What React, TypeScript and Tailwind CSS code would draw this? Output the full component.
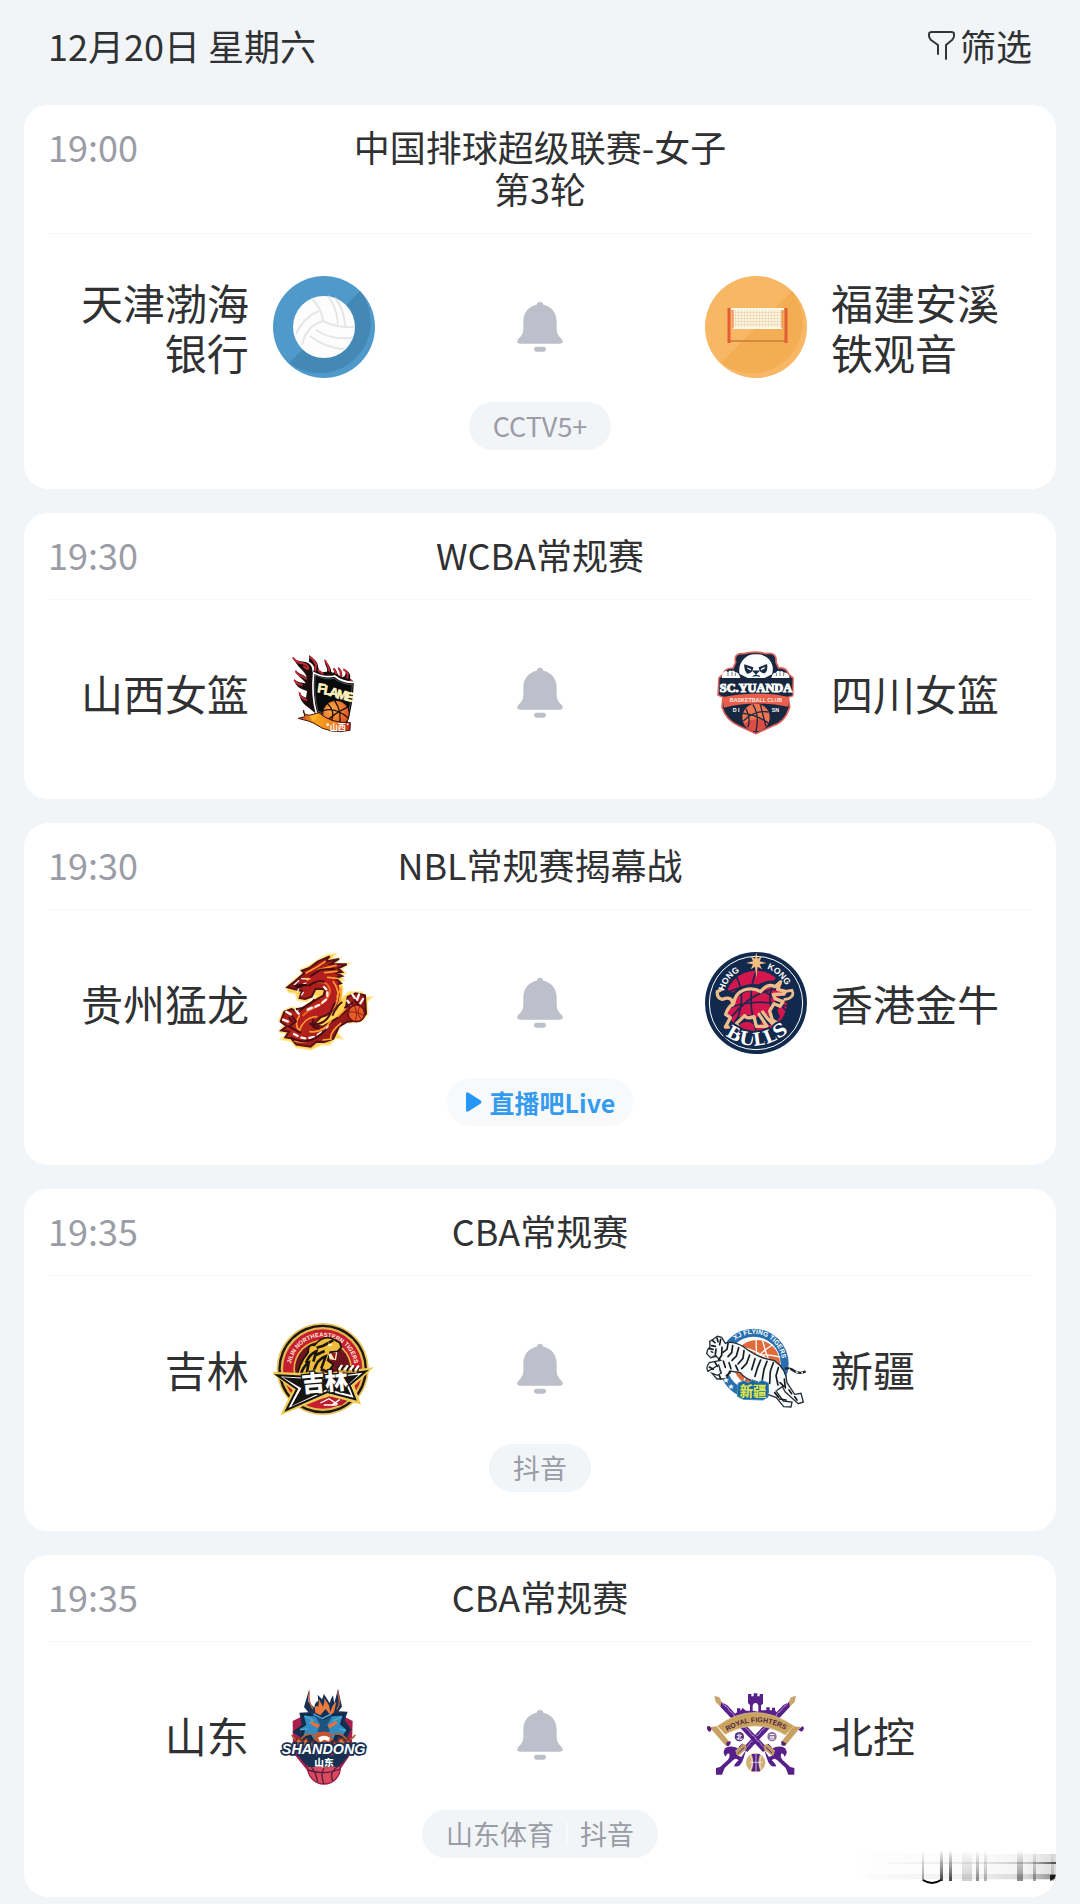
import type { ReactNode } from "react";

interface Team {
  name: string;
  logo: ReactNode;
}

interface Match {
  time: string;
  title: string[];
  home: Team;
  away: Team;
  channels: string[];
  live?: string;
}

const logoClass = "w-[102px] h-[102px] shrink-0";

function VolleyballLogo() {
  return (
    <svg viewBox="0 0 102 102" className={logoClass}>
      <circle cx="51" cy="51" r="51" fill="#4f9aca" />
      <path d="M87 15A51 51 0 0 1 16 87Z" fill="#4488b6" />
      <circle cx="51" cy="51" r="31" fill="#fdfdfd" />
      <g fill="none" stroke="#e6e6e8" strokeWidth="2">
        <path d="M39 23Q49 33 50 45Q33 50 29 69" />
        <path d="M55 20Q64 32 65 48" />
        <path d="M62 22Q71 32 72 50" />
        <path d="M50 45Q63 52 82 51" />
        <path d="M43 54Q57 64 79 62" />
        <path d="M37 60Q52 72 71 73" />
        <path d="M46 35Q31 41 23 58" />
      </g>
    </svg>
  );
}

function NetLogo() {
  return (
    <svg viewBox="0 0 102 102" className={logoClass}>
      <defs>
        <pattern id="net" width="3" height="3" patternUnits="userSpaceOnUse">
          <rect width="3" height="3" fill="#fdf3df" />
          <path d="M0 0H3M0 0V3" stroke="#e6d0a8" strokeWidth="1" />
        </pattern>
      </defs>
      <circle cx="51" cy="51" r="51" fill="#f8b765" />
      <path d="M87 15A51 51 0 0 1 16 87Z" fill="#f3ad53" />
      <rect x="25" y="64" width="56" height="2" fill="#d38a3c" />
      <rect x="28" y="33" width="49" height="19" fill="url(#net)" />
      <path d="M26 33H79M28 52H77" stroke="#fff7e8" strokeWidth="2" />
      <path d="M28 34V52M77 34V52" stroke="#e77c4c" strokeWidth="1" />
      <path d="M24 32V67M81 32V67" stroke="#e35e37" strokeWidth="3" />
    </svg>
  );
}

function FlameLogo() {
  return (
    <svg viewBox="39 36 306 306" className={logoClass}>
      <defs>
        <linearGradient id="flameRibbon" x1="0" x2="1" y1="0" y2="0">
          <stop offset="0" stopColor="#d2401c" />
          <stop offset=".35" stopColor="#f7a21c" />
          <stop offset=".7" stopColor="#f0801f" />
          <stop offset="1" stopColor="#c6201b" />
        </linearGradient>
        <radialGradient id="flameBall" cx=".35" cy=".35" r=".8">
          <stop offset="0" stopColor="#fbb046" />
          <stop offset="1" stopColor="#d8411c" />
        </radialGradient>
      </defs>
      <path
        d="M97 80C107 93 124 94 137 96C151 101 159 111 157 126C170 117 159 101 147 95L148 75C158 86 172 91 174 108L178 127L201 125C205 112 192 106 194 86C202 103 213 108 214 126C225 134 224 119 220 113C233 119 229 132 239 138C244 129 235 121 235 112C247 121 248 134 246 142C260 139 260 123 249 116C265 121 274 133 270 145L283 158L270 170L166 250L146 233C133 225 119 213 116 184C123 200 131 199 138 204L141 183C124 177 107 173 102 147C112 158 124 157 137 160C132 147 115 146 106 119C119 135 132 133 140 142C138 125 112 113 97 80Z"
        fill="#1a0c0e"
      />
      <g fill="none" stroke="#c42a35" strokeWidth="6" strokeLinecap="round" strokeLinejoin="round">
        <path d="M100 84Q109 98 127 100Q147 104 144 117Q137 116 132 109" />
        <path d="M108 125Q115 137 130 140L138 146" />
        <path d="M104 152Q113 165 126 164" />
        <path d="M119 190Q123 206 139 210" />
        <path d="M151 81Q164 92 168 104L166 121" />
        <path d="M196 93Q206 106 208 122" />
        <path d="M236 115Q245 126 242 138" />
        <path d="M252 119Q268 129 262 143" />
        <path d="M222 117L228 130M176 122L188 130M272 151L281 158" />
      </g>
      <path d="M161 128Q195 145 224 138Q248 158 284 157Q282 224 264 281L169 249Q154 197 161 128Z" fill="#07080a" stroke="#fff" strokeWidth="5" />
      <path d="M166 135Q196 151 222 145Q246 163 277 164Q275 218 260 270L174 244Q160 192 166 135Z" fill="#08090b" stroke="#73777a" strokeWidth="2" />
      <g fontFamily="Liberation Sans" fontWeight="700" fontSize="38" fill="#fff3bc" stroke="#fff3bc" strokeWidth="2">
        <text x="171" y="186" transform="rotate(8 171 186)">F</text>
        <text x="190" y="192" transform="rotate(10 190 192)">L</text>
        <text x="206" y="197" transform="rotate(12 206 197)">A</text>
        <text x="228" y="204" transform="rotate(12 228 204)">M</text>
        <text x="254" y="211" transform="rotate(12 254 211)">E</text>
      </g>
      <circle cx="228" cy="251" r="40" fill="url(#flameBall)" stroke="#180b09" strokeWidth="3" />
      <path d="M190 242Q225 230 265 264M224 212Q247 245 238 288M196 276Q226 248 262 232M203 222Q231 248 209 281" fill="none" stroke="#25100b" strokeWidth="4" />
      <path d="M131 240Q126 252 147 256L177 248Q208 279 271 278L270 301Q210 315 162 280L145 273Q132 270 115 265L134 260Z" fill="url(#flameRibbon)" stroke="#3a1710" strokeWidth="3" />
      <path d="M148 258L176 252L160 276Z" fill="#ffb52a" />
      <text x="209" y="300" fontFamily="Noto Sans CJK SC" fontSize="24" fontWeight="700" fill="#fff">山西</text>
      <circle cx="203" cy="284" r="4" fill="#fff" />
      <circle cx="263" cy="283" r="3" fill="#fff" />
    </svg>
  );
}

function YuandaLogo() {
  return (
    <svg viewBox="15 6 306 306" className={logoClass}>
      <path
        d="M107 67Q100 38 131 41Q166 32 199 41Q231 36 228 66L236 84Q258 80 267 104L279 114L278 167L265 172L269 202Q254 248 219 257L168 281L116 257Q79 242 66 202L69 172L54 165L57 114L68 104Q76 82 99 85Z"
        fill="#16273f"
        stroke="#dc635c"
        strokeWidth="5"
      />
      <circle cx="126" cy="60" r="15" fill="#172a43" />
      <circle cx="209" cy="59" r="15" fill="#172a43" />
      <path d="M119 102Q113 76 132 56Q148 41 168 43Q194 42 207 58Q224 79 216 103L194 114H143Z" fill="#fbfcfd" />
      <path d="M133 73L160 82Q159 101 141 101Q131 91 133 73ZM201 72L176 82Q178 100 195 100Q205 91 201 72Z" fill="#172b45" />
      <path d="M142 84L153 90M194 83L183 89" stroke="#fff" strokeWidth="4" />
      <path d="M158 93H178L168 102ZM168 101V108M158 109Q168 103 180 109" fill="#172b45" stroke="#172b45" strokeWidth="3" />
      <path d="M66 114Q64 101 75 94Q82 91 84 98Q87 89 96 93Q102 89 105 97Q117 96 121 114ZM214 114Q217 97 228 98Q233 89 240 95Q246 90 251 98Q265 96 269 114Z" fill="#fff" />
      <path d="M84 98V108M96 95V108M106 99V108M229 99V108M240 97V108M251 99V108" stroke="#263e58" strokeWidth="2" />
      <rect x="59" y="115" width="218" height="51" fill="#16273f" />
      <text x="168" y="155" textAnchor="middle" fontFamily="Liberation Serif" fontSize="37" fontWeight="700" fill="#fff" stroke="#fff" strokeWidth="3">SC.YUANDA</text>
      <path d="M68 171Q167 150 267 171L264 200Q167 180 71 203Z" fill="#e95e4c" />
      <text x="168" y="185" textAnchor="middle" fontFamily="Liberation Sans" fontSize="16" fontWeight="700" fill="#fff0e8">BASKETBALL CLUB</text>
      <text x="98" y="216" fontFamily="Liberation Sans" fontSize="16" fontWeight="700" fill="#fff">D I</text>
      <text x="215" y="216" fontFamily="Liberation Sans" fontSize="16" fontWeight="700" fill="#fff">SN</text>
      <circle cx="168" cy="232" r="41" fill="#f27552" />
      <path d="M131 251A41 41 0 0 0 206 247Q170 227 131 251Z" fill="#dc4d46" />
      <path d="M129 220Q168 223 205 249M138 206Q154 241 143 262M159 194Q179 228 168 273M181 194Q190 229 198 259M130 243Q163 210 205 216" fill="none" stroke="#19293f" strokeWidth="4" />
    </svg>
  );
}

function DragonLogo() {
  return (
    <svg viewBox="24 39 306 306" className={logoClass}>
      <defs>
        <linearGradient id="dragonBody" x1="0" y1="0" x2="1" y2="1">
          <stop offset="0" stopColor="#8b0f19" />
          <stop offset=".5" stopColor="#b8261b" />
          <stop offset="1" stopColor="#6f0b17" />
        </linearGradient>
      </defs>
      <path
        d="M63 145L88 121L112 103L104 92L126 83L151 67L184 48L213 43L200 61L227 56L211 74L256 73L230 90L244 103L224 109L239 124L222 128L234 142L232 176L253 158L292 159L303 174L322 173L307 188L309 225L293 246L253 253L234 247L218 283L234 300L211 298L195 318L169 318L137 333L94 326L76 307L45 301L66 286L42 278L56 259L41 244L53 216L79 204L108 209L155 171L146 169L125 188L97 184L91 164L70 160Z"
        fill="#ffd454"
        stroke="#ffeaa0"
        strokeWidth="4"
      />
      <path
        d="M67 145L91 126L118 102L111 95L133 87L158 68L194 52L180 68L222 60L197 75L245 76L219 88L231 99L211 101L231 111L211 117L228 133L215 137Q231 174 206 210Q196 227 168 234L143 258L174 263L215 238L241 218L248 174L272 163L300 169L303 224L287 244L247 248L222 263L205 299L178 309L154 308L137 323L94 317L79 298L61 295L72 278L49 274L65 262L47 248L58 218L79 210L99 219L125 199L176 169L180 151L152 149L140 173L120 180L104 177L111 156Z"
        fill="url(#dragonBody)"
        stroke="#55111a"
        strokeWidth="6"
      />
      <path d="M133 128Q163 105 188 121Q221 145 205 181Q194 207 147 221Q116 234 104 259" fill="none" stroke="#b51e1e" strokeWidth="28" />
      <path d="M154 130Q189 123 195 153Q195 183 152 204Q128 214 113 231" fill="none" stroke="#e8641f" strokeWidth="6" />
      <g fill="none" stroke="#fff3ed" strokeWidth="7" strokeLinecap="round">
        <path d="M177 144L184 151M187 160V171M183 182L172 191M162 198L151 203M141 206L128 212" />
        <path d="M87 285L98 291M109 296L121 298M133 297L147 294M158 288L169 280M178 271L188 261" />
        <path d="M101 125L88 137M110 119L131 120M123 132L107 138M101 149L97 159M115 160L110 168" strokeWidth="4" />
        <path d="M64 218L77 226M92 213L101 224M54 242L69 248M262 166L270 178M282 166L276 183M247 185L256 197M294 180L286 193" />
      </g>
      <path d="M84 141Q110 127 137 141Q119 138 99 149Z" fill="#340a13" />
      <path d="M119 116L139 119L127 125Z" fill="#ffcf47" />
      <g fill="none" stroke="#ff9b2e" strokeWidth="5" strokeLinecap="round">
        <path d="M123 102L157 83L181 67M161 92L213 79M179 101L215 97M188 115L217 118" />
        <path d="M205 128Q235 169 201 214M216 173L229 146L225 189L215 213M155 233Q116 235 103 276Q86 255 103 231" />
        <path d="M198 245Q171 284 135 278M227 253Q192 282 198 300L174 303M219 232L242 209M89 306Q110 312 134 305" />
      </g>
      <g fill="none" stroke="#4d0b16" strokeWidth="6">
        <path d="M135 113L166 92L211 89M131 141Q153 122 179 128M149 181Q128 207 93 211M80 231L93 247L72 263L108 282M133 254Q180 264 198 219" />
        <path d="M202 230Q216 198 232 189M210 190L197 219M146 240Q133 269 164 268M71 234L83 249M76 295Q135 327 184 270M238 207L265 190M267 181L285 203" />
      </g>
      <circle cx="274" cy="223" r="25" fill="#e85b25" stroke="#67101a" strokeWidth="5" />
      <path d="M250 220Q272 215 297 230M267 200Q280 219 271 246M285 202Q271 220 289 242" fill="none" stroke="#902219" strokeWidth="3" />
    </svg>
  );
}

function BullsLogo() {
  return (
    <svg viewBox="30 39 306 306" className={logoClass}>
      <defs>
        <path id="hongArc" d="M85 160Q104 97 165 88" />
        <path id="kongArc" d="M212 88Q262 103 283 162" />
        <path id="bullsArc" d="M82 282Q182 362 290 272" />
      </defs>
      <circle cx="183" cy="192" r="153" fill="#12294e" />
      <circle cx="183" cy="192" r="140" fill="none" stroke="#fff" strokeWidth="3" />
      <circle cx="183" cy="188" r="93" fill="#d3164d" />
      <path d="M94 164Q184 105 272 214M125 115Q157 181 119 255M184 94Q152 173 184 280M244 119Q203 182 249 252M91 212Q176 174 275 201M103 241Q183 141 268 151" fill="none" stroke="#17294f" strokeWidth="5" />
      <path
        d="M83 263Q99 254 91 231Q81 219 91 206Q107 191 99 169Q73 153 79 148Q87 154 97 163Q113 177 122 166Q152 139 191 147Q219 131 239 135L250 125L246 144L276 151L282 171L294 163L287 180L257 181L236 212L244 233L225 248L203 230L188 250L170 241L154 238L131 245L117 268Z"
        fill="none"
        stroke="#14294e"
        strokeWidth="20"
        strokeLinejoin="round"
      />
      <path
        d="M113 264H91L106 236L92 226Q97 206 116 193Q120 163 147 153Q175 144 197 158Q217 132 240 143L257 128L248 151L271 157L267 165L235 166L240 179L264 188L255 202L237 194L224 216L232 243L246 252L238 260L218 239L203 219M192 226L216 262H184L177 233Q155 241 149 230L124 254L131 265M113 198Q113 169 82 181Q65 178 67 158L80 151"
        fill="none"
        stroke="#efbd8c"
        strokeWidth="10"
        strokeLinejoin="round"
        strokeLinecap="round"
      />
      <path d="M267 158L291 154Q299 170 281 179L269 181" fill="none" stroke="#efbd8c" strokeWidth="8" strokeLinecap="round" />
      <path d="M184 40L188 59L201 51L194 67L215 72L194 76L201 91L188 83L184 116L180 83L167 91L174 76L153 72L174 67L167 51L180 59Z" fill="#f4bd82" />
      <g fontFamily="Liberation Sans" fontWeight="700" fontSize="26" fill="#fff">
        <text><textPath href="#hongArc" startOffset="4">HONG</textPath></text>
        <text><textPath href="#kongArc" startOffset="4">KONG</textPath></text>
      </g>
      <text fontFamily="DejaVu Serif" fontSize="54" fontWeight="700" fill="#fff" stroke="#12294e" strokeWidth="12" paintOrder="stroke">
        <textPath href="#bullsArc" startOffset="50%" textAnchor="middle">BULLS</textPath>
      </text>
    </svg>
  );
}

function JilinLogo() {
  return (
    <svg viewBox="24 24 306 306" className={logoClass}>
      <defs>
        <path id="jilinArc" d="M80 200A96 96 0 1 1 266 200" />
      </defs>
      <circle cx="173" cy="177" r="138" fill="#eac45c" />
      <circle cx="173" cy="177" r="133" fill="#1c1713" />
      <circle cx="173" cy="177" r="126" fill="#e1ba4e" />
      <circle cx="173" cy="177" r="119" fill="#c71d2f" />
      <circle cx="173" cy="177" r="88" fill="#dfb63f" />
      <circle cx="173" cy="177" r="83" fill="#6d141e" />
      <text fontFamily="Liberation Sans" fontSize="18" fontWeight="700" fill="#fff1d5">
        <textPath href="#jilinArc" startOffset="50%" textAnchor="middle">JILIN NORTHEASTERN TIGERS</textPath>
      </text>
      <path d="M95 208Q99 165 130 127Q128 101 149 106Q171 77 200 85L224 98L229 112L218 124L196 126L188 151L205 164L189 185L170 176L162 211Z" fill="#f0bd3b" stroke="#17130c" strokeWidth="5" />
      <path d="M105 203Q112 170 131 158L124 198M123 159Q132 134 154 124L145 155M145 188Q155 147 182 139L169 175M155 113L175 107L190 99M153 135L179 123M191 98L205 91" fill="none" stroke="#1a160e" strokeWidth="8" />
      <path d="M188 103L205 101L193 111ZM190 132L217 126L213 151L194 148Z" fill="#fff0bd" />
      <path d="M198 130L213 128L209 149Z" fill="#9b1826" />
      <path d="M29 190L121 193L153 182L181 193L315 177L264 226L282 278L187 255L54 308L88 239Z" fill="#fff2ad" stroke="#efcb54" strokeWidth="8" />
      <path d="M37 196L124 200L154 190L182 200L302 184L254 225L271 268L187 246L64 300L96 237Z" fill="#fff" stroke="#171411" strokeWidth="6" />
      <path d="M53 202L129 207L151 196L167 206L281 194L245 228L258 255L188 237L79 289L109 235Z" fill="#171512" />
      <text x="112" y="248" fontFamily="Noto Sans CJK SC" fontSize="70" fontWeight="900" fill="#fff" stroke="#191512" strokeWidth="8" paintOrder="stroke" transform="rotate(-5 112 248)">吉林</text>
      <path d="M155 276L193 259L247 272L230 286L196 291Z" fill="#b91e2e" />
      <path d="M166 279L192 266L218 283M200 286L224 269M176 285H215" stroke="#fff" strokeWidth="4" fill="none" />
      <path d="M219 187Q215 172 227 168Q232 171 230 181Q237 164 246 171L247 184Q253 165 262 171L264 185Q271 166 281 174L277 189" fill="#cf9930" stroke="#17150e" strokeWidth="4" />
      <path d="M223 177L230 167M240 178L247 168M257 178L264 168M272 179L280 169" stroke="#fff" strokeWidth="7" strokeLinecap="round" />
    </svg>
  );
}

function XinjiangLogo() {
  return (
    <svg viewBox="30 24 306 306" className={logoClass}>
      <defs>
        <path id="tigersArc" d="M108 104A86 86 0 0 1 261 164" />
      </defs>
      <circle cx="176" cy="161" r="105" fill="#276fae" />
      <circle cx="176" cy="161" r="81" fill="#fff" />
      <circle cx="185" cy="160" r="70" fill="#df6a3c" />
      <path d="M124 111Q188 112 253 180M139 103Q152 168 237 210M184 89Q178 157 223 219M113 158Q188 122 254 141M145 217Q170 142 232 105M203 91Q215 154 250 191" fill="none" stroke="#fff" strokeWidth="4" />
      <text fontFamily="Liberation Sans" fontSize="20" fontWeight="700" fill="#fff">
        <textPath href="#tigersArc" startOffset="50%" textAnchor="middle">XJ FLYING TIGERS</textPath>
      </text>
      <path
        d="M38 119L45 111L44 94L56 87L67 79L80 82L91 100Q111 91 145 110Q175 133 205 144L238 152Q274 177 276 218L299 253L318 250L325 276L310 281L294 267L271 246L262 230L243 243L265 273L291 276L288 291L266 290L244 263L218 253L203 232L185 215Q150 209 136 188L104 183L93 207L66 207L51 190L68 196L79 189L71 165L39 184Q31 172 43 158L77 151L63 139L47 143L35 131Z"
        fill="#f8f9f9"
        stroke="#263039"
        strokeWidth="4"
      />
      <g fill="none" stroke="#161b20" strokeWidth="5" strokeLinecap="round">
        <path d="M52 91L60 98M66 84L69 95M43 116L54 118M50 107L61 109M77 88L74 104M63 117L61 134M81 112L80 136L71 149" />
        <path d="M99 101L96 118L84 127M113 107L110 128L99 140M131 113L124 138L111 151M147 122L144 145L129 162M164 135L155 160L140 176" />
        <path d="M180 146L170 179M197 150L188 172L180 199M216 154L207 178L202 208M235 158L226 184L224 220M250 173L243 197L249 225" />
        <path d="M60 157L67 169M85 153L91 172M102 158L108 176M122 166L129 182M94 197L106 188M73 197L77 206M43 171L55 178" />
        <path d="M253 215L266 229M268 207L271 234M282 240L290 251M299 260L306 270M239 248L251 262M254 267L273 270M213 222L220 245" />
      </g>
      <path d="M269 176Q287 173 299 184Q318 193 332 184" fill="none" stroke="#20272d" strokeWidth="7" />
      <path d="M281 177L285 180M302 185L309 188M319 189L324 188" stroke="#fff" strokeWidth="4" />
      <path d="M47 124L55 128M53 139L65 137" stroke="#202a32" strokeWidth="4" />
      <path d="M129 220L146 212L160 219L173 209L187 219L201 211L221 220L219 261L204 270L145 268L127 259Z" fill="#1c669f" stroke="#4693bc" strokeWidth="3" />
      <text x="134" y="257" fontFamily="Noto Sans CJK SC" fontSize="40" fontWeight="900" fill="#d9e452">新疆</text>
      <g fill="#fff">
        <path d="M93 202L96 208H102L97 212L99 218L93 215L87 218L89 212L84 208H91Z" />
        <path d="M108 221L111 227H117L112 231L114 237L108 234L102 237L104 231L99 227H106Z" />
        <path d="M256 202L259 208H265L260 212L262 218L256 215L250 218L252 212L247 208H254Z" />
        <path d="M239 226L242 232H248L243 236L245 242L239 239L233 242L235 236L230 232H237Z" />
      </g>
    </svg>
  );
}

function ShandongLogo() {
  return (
    <svg viewBox="24 12 306 306" className={logoClass}>
      <path d="M83 123L121 104H227L263 123L260 218L222 274L177 295L128 273L84 218Z" fill="#a91e4b" />
      <path d="M133 26L130 65L148 83Q149 66 160 63L158 44L171 58L177 42L194 69Q198 55 204 46L208 70L219 26L231 80L220 94L248 95L239 121L259 148L246 173L252 193L250 228L222 262L177 278L128 262L100 228L99 193L107 171L82 157L110 134L103 98L130 97L117 81Z" fill="#153052" />
      <path d="M151 98Q146 72 160 80L162 58L174 80Q180 65 178 54L192 76L196 97Q203 70 214 66L207 97L196 105L182 87L166 106Z" fill="#ec7940" />
      <path d="M133 35Q129 68 144 87M217 35Q230 69 215 88" fill="none" stroke="#ca6241" strokeWidth="4" />
      <path d="M113 104L148 106L174 122L198 106L236 104L228 132L248 150L235 169L213 164L205 185L175 175L147 185L136 165L111 175L117 153L96 150L121 134Z" fill="#308cc1" stroke="#102844" strokeWidth="5" />
      <path d="M119 108L144 121L132 130M231 110L206 121L217 132M145 102L171 116L199 102M105 149L128 147M223 147L242 151" fill="none" stroke="#4ba5cd" strokeWidth="5" />
      <path d="M137 122L166 136L159 145L138 133ZM215 122L187 136L193 145L216 132Z" fill="#f06e38" />
      <path d="M150 107L177 119L203 107L187 134L195 154L175 163L157 154L165 134Z" fill="#1c547f" />
      <path d="M154 159Q176 149 198 160L195 169L205 178L194 188H159L146 176Z" fill="#c8532e" />
      <path d="M159 173Q177 161 195 173L192 184L178 179L165 186Z" fill="#fff" />
      <path d="M157 167Q127 156 114 171Q97 194 81 166M197 166Q225 155 238 171Q251 190 270 166" fill="none" stroke="#b66138" strokeWidth="5" strokeLinecap="round" />
      <path d="M94 195Q89 178 102 174L114 187Q119 172 128 178L130 193L144 184L146 201M206 200L205 184L218 190L222 175L235 176L239 188L251 175L258 195" fill="#d8733f" stroke="#782f2c" strokeWidth="5" />
      <circle cx="177" cy="263" r="49" fill="#d94a5c" stroke="#9b1f49" strokeWidth="4" />
      <path d="M128 270Q180 287 225 267M139 261Q152 276 158 306M177 264Q165 282 177 312M217 260Q191 280 204 303" fill="none" stroke="#541d46" strokeWidth="4" />
      <path d="M124 232L145 226H212L230 232L224 260L130 261Z" fill="#153052" />
      <text x="177" y="257" textAnchor="middle" fontFamily="Noto Sans CJK SC" fontSize="29" fontWeight="900" fill="#fff">山东</text>
      <text x="176" y="223" textAnchor="middle" fontFamily="Liberation Sans" fontSize="43" fontStyle="italic" fontWeight="700" fill="#fff" stroke="#173052" strokeWidth="10" paintOrder="stroke">SHANDONG</text>
    </svg>
  );
}

function SwordShape() {
  return (
    <g>
      <path d="M58 47L73 52L83 72L75 79L62 66Z" fill="#c9a66c" />
      <path d="M79 67L96 75L218 205L204 216L76 80Z" fill="#58208a" />
      <path d="M82 69L206 202M91 76L211 205" stroke="#d4bde7" strokeWidth="2" strokeDasharray="16 8" />
      <path d="M209 194L219 191L244 218L232 228L206 207Z" fill="#c09b60" />
      <path d="M208 210L222 231L236 225L240 213L232 205Q252 195 270 204Q281 220 268 230Q266 219 258 221Q255 229 262 239L286 261L298 264V284H280L272 264L247 241Q238 231 230 241Q236 244 244 258Q229 264 220 247Q214 234 208 210Z" fill="#58208a" />
      <path d="M219 192L230 202M213 202L231 219" stroke="#58208a" strokeWidth="3" />
    </g>
  );
}

function RoyalFightersLogo() {
  return (
    <svg viewBox="30 12 306 306" className={logoClass}>
      <defs>
        <path id="fightersArc" d="M95 155Q182 100 272 151" />
      </defs>
      <path d="M159 42H169V49H176V40H187V49H194V42H204V71L198 76V91H214V82H224V91H231V83H240V91L252 107L244 125H119L112 108L126 97V85H136V93L143 84L153 92H165V75L159 69Z" fill="#58208a" />
      <path d="M173 92V78Q174 69 182 69Q190 70 190 80V95Z" fill="#fff" />
      <g transform="translate(361 0) scale(-1 1)"><SwordShape /></g>
      <SwordShape />
      <path d="M43 141L65 139L106 189L92 197ZM317 141L295 139L257 188L271 197Z" fill="#c7a163" />
      <path d="M36 140Q34 151 45 156L50 148L43 137ZM323 138Q332 147 319 155L310 149ZM94 187L106 183Q110 196 95 199ZM260 182L273 190Q273 202 259 195Z" fill="#54207b" />
      <path d="M67 138Q179 57 297 138L271 165Q184 112 91 163Z" fill="#c8a25f" stroke="#e2c897" strokeWidth="2" />
      <text fontFamily="Liberation Sans" fontSize="21" fontWeight="700" fill="#512244">
        <textPath href="#fightersArc" startOffset="50%" textAnchor="middle">ROYAL FIGHTERS</textPath>
      </text>
      <circle cx="133" cy="170" r="14" fill="#56317e" />
      <circle cx="231" cy="170" r="14" fill="#8b6f99" />
      <text x="133" y="176" textAnchor="middle" fontFamily="Noto Sans CJK SC" fontSize="17" fontWeight="700" fill="#fff">北</text>
      <text x="231" y="176" textAnchor="middle" fontFamily="Noto Sans CJK SC" fontSize="17" fontWeight="700" fill="#fff">京</text>
      <circle cx="182" cy="248" r="29" fill="#d2b177" />
      <path d="M170 222H195Q185 248 196 274H169Q180 248 170 222Z" fill="#58208a" />
      <path d="M183 220V276M164 247H202M166 226Q178 248 166 270M200 226Q188 248 200 270" fill="none" stroke="#fff" strokeWidth="2" />
    </svg>
  );
}

function FilterIcon() {
  return (
    <svg viewBox="0 0 28 30" className="w-7 h-[30px]" fill="none" stroke="#333437" strokeWidth="2" strokeLinejoin="round" strokeLinecap="round">
      <path d="M10 24V15L3 10Q1 8 1 6V4Q1 2 4 2H23Q26 2 26 4V6Q26 8 24 10L18 15V29" />
    </svg>
  );
}

function BellIcon() {
  return (
    <svg viewBox="285 115 150 156" className="w-[50px] h-[52px]" fill="#bdc0ca">
      <path d="M360 117C366 117 369 121 370 126C395 131 410 151 410 176V198C410 214 418 221 426 230C431 238 427 243 420 243H300C293 243 289 238 294 230C302 221 310 214 310 198V176C310 151 325 131 350 126C351 121 354 117 360 117Z" />
      <rect x="342" y="252" width="36" height="15" rx="7" />
    </svg>
  );
}

// faded stamp in the corner of the last card
function Watermark() {
  return (
    <svg viewBox="0 0 200 36" className="absolute right-0 bottom-3 w-[200px] h-9">
      <defs>
        <linearGradient id="fadeRow" x1="0" x2="1" y1="0" y2="0">
          <stop offset="0" stopColor="#000" stopOpacity=".03" />
          <stop offset=".6" stopColor="#000" stopOpacity=".12" />
          <stop offset=".85" stopColor="#000" stopOpacity=".3" />
          <stop offset="1" stopColor="#000" stopOpacity=".9" />
        </linearGradient>
        <linearGradient id="fadeCol" x1="0" x2="0" y1="0" y2="1">
          <stop offset="0" stopColor="#222" stopOpacity="0" />
          <stop offset=".6" stopColor="#222" stopOpacity=".5" />
          <stop offset="1" stopColor="#222" stopOpacity=".85" />
        </linearGradient>
      </defs>
      <rect x="0" y="5" width="200" height="26" fill="url(#fadeRow)" opacity=".15" />
      <rect x="30" y="13" width="170" height="2" fill="url(#fadeRow)" opacity=".7" />
      <rect x="10" y="25" width="190" height="5" fill="url(#fadeRow)" opacity=".4" />
      <g fill="url(#fadeCol)">
        <rect x="66" y="1" width="2" height="31" opacity=".5" />
        <rect x="84" y="1" width="3" height="31" />
        <rect x="93" y="1" width="3" height="31" />
        <rect x="106" y="1" width="10" height="31" opacity=".25" />
        <rect x="120" y="1" width="3" height="31" opacity=".6" />
        <rect x="128" y="1" width="3" height="31" opacity=".4" />
        <rect x="161" y="1" width="6" height="31" opacity=".6" />
        <rect x="177" y="1" width="3" height="31" opacity=".5" />
        <rect x="195" y="1" width="3" height="31" opacity=".3" />
      </g>
      <path d="M67 31Q76 37 85 31" fill="none" stroke="#000" strokeWidth="2" />
      <path d="M194 26H200L198 30L194 32Z" fill="#000" opacity=".8" />
    </svg>
  );
}

const matches: Match[] = [
  {
    time: "19:00",
    title: ["中国排球超级联赛-女子", "第3轮"],
    home: { name: "天津渤海银行", logo: <VolleyballLogo /> },
    away: { name: "福建安溪铁观音", logo: <NetLogo /> },
    channels: ["CCTV5+"],
  },
  {
    time: "19:30",
    title: ["WCBA常规赛"],
    home: { name: "山西女篮", logo: <FlameLogo /> },
    away: { name: "四川女篮", logo: <YuandaLogo /> },
    channels: [],
  },
  {
    time: "19:30",
    title: ["NBL常规赛揭幕战"],
    home: { name: "贵州猛龙", logo: <DragonLogo /> },
    away: { name: "香港金牛", logo: <BullsLogo /> },
    channels: [],
    live: "直播吧Live",
  },
  {
    time: "19:35",
    title: ["CBA常规赛"],
    home: { name: "吉林", logo: <JilinLogo /> },
    away: { name: "新疆", logo: <XinjiangLogo /> },
    channels: ["抖音"],
  },
  {
    time: "19:35",
    title: ["CBA常规赛"],
    home: { name: "山东", logo: <ShandongLogo /> },
    away: { name: "北控", logo: <RoyalFightersLogo /> },
    channels: ["山东体育", "抖音"],
  },
];

interface MatchCardProps {
  match: Match;
  last: boolean;
}

function MatchCard({ match, last }: MatchCardProps) {
  const hasFooter = match.channels.length > 0 || match.live;
  return (
    <article className="relative rounded-3xl bg-white overflow-hidden">
      <div className="mx-6 pt-5 pb-6 grid grid-cols-[1fr_auto_1fr] text-4xl leading-[42px] border-b border-[#f5f6f8]">
        <time className="text-[#9a9ca6]">{match.time}</time>
        <h2 className="text-center">
          {match.title.map((line) => (
            <span key={line} className="block">
              {line}
            </span>
          ))}
        </h2>
      </div>
      <div className="pt-[42px] grid grid-cols-[1fr_32%_1fr] items-center text-[42px] leading-[50px]">
        <div className="flex items-center justify-end gap-6">
          <span className="max-w-[168px] text-right">{match.home.name}</span>
          {match.home.logo}
        </div>
        <button aria-label="提醒" className="justify-self-center">
          <BellIcon />
        </button>
        <div className="flex items-center gap-6">
          {match.away.logo}
          <span className="max-w-[168px]">{match.away.name}</span>
        </div>
      </div>
      {hasFooter ? (
        <div className="mt-6 pb-[39px] flex justify-center">
          {match.live ? (
            <a href="#live" className="h-12 px-[18px] flex items-center gap-2 rounded-full bg-[#f8f9fb] text-[25px] leading-9 font-bold text-[#349bee]">
              <svg viewBox="0 0 17 22" className="w-[17px] h-[22px]" fill="#2797f5">
                <path d="M1 3Q1 0 4 2L15 9Q18 11 15 13L4 20Q1 22 1 19Z" />
              </svg>
              {match.live}
            </a>
          ) : (
            <div className="h-12 px-6 flex items-center rounded-full bg-[#f1f5f8] text-[27px] leading-9 text-[#9a9ca6]">
              {match.channels.map((channel, i) => (
                <span key={channel} className="flex items-center">
                  {i > 0 && <span className="mx-3 w-0.5 h-6 bg-[#f8fafc]" />}
                  {channel}
                </span>
              ))}
            </div>
          )}
        </div>
      ) : (
        <div className="h-[55px]" />
      )}
      {last && <Watermark />}
    </article>
  );
}

function App() {
  return (
    <main className="min-h-screen px-6 pb-1.5 bg-[#f1f5f8] text-[#303133] font-['Noto_Sans_CJK_SC',sans-serif]">
      <header className="h-[105px] px-6 pb-4 flex items-center justify-between text-4xl">
        <h1>12月20日 星期六</h1>
        <button className="flex items-center gap-1">
          <FilterIcon />
          筛选
        </button>
      </header>
      <div className="flex flex-col gap-6">
        {matches.map((match, i) => (
          <MatchCard key={i} match={match} last={i === matches.length - 1} />
        ))}
      </div>
    </main>
  );
}

export default App;
